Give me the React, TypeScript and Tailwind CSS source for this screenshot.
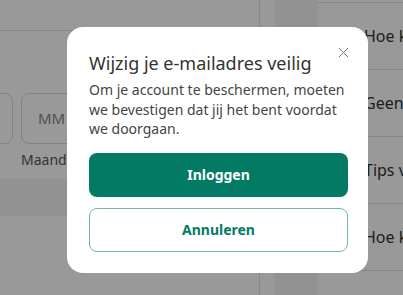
import { X } from "lucide-react";

const font = { fontFamily: '"Noto Sans", "Liberation Sans", sans-serif' };

const listItems = ["Hoe kan ik mijn e-mailadres wijzigen?", "Geen e-mail ontvangen?", "Tips voor een veilig account", "Hoe kan ik inloggen?"];

export default function App() {
  return (
    <div className="relative w-[403px] h-[295px] overflow-hidden bg-white text-[#333]" style={font}>
      {/* page underneath */}
      <div className="flex h-full">
        <div className="w-[260px] shrink-0 border-r border-[#e2e2e2] flex flex-col">
          <div className="h-[31px] border-b border-[#e2e2e2]" />
          <div className="flex gap-2 mt-[62px] -ml-[40px]">
            <div className="w-[53px] h-[51px] rounded-lg border border-[#d8d8d8]" />
            <div className="flex flex-col items-start">
              <div className="w-[70px] h-[51px] rounded-lg border border-[#d8d8d8] flex items-center pl-[16px] text-[15px] text-[#888]">
                MM
              </div>
              <span className="mt-[5px] text-[14px] text-[#555]">Maand</span>
            </div>
          </div>
          <div className="mt-[9px] h-[37px] bg-[#f4f4f4]" />
        </div>
        <div className="w-[15px] shrink-0" />
        <div className="w-[43px] shrink-0 bg-[#f4f4f4]" />
        <div className="flex-1 min-w-0 flex flex-col pt-[2px] overflow-hidden">
          <div className="border-b border-[#e2e2e2]" />
          {listItems.map((t) => (
            <div key={t} className="h-[67px] border-b border-[#e2e2e2] flex items-center pl-[46px] text-[16px] text-[#333] whitespace-nowrap overflow-hidden">
              {t}
            </div>
          ))}
        </div>
      </div>

      {/* overlay */}
      <div className="absolute inset-0 bg-black/40" />

      {/* modal */}
      <div className="absolute left-[67px] top-[27px] w-[301px] h-[246px] rounded-2xl bg-white px-[22px] pt-[24px]">
        <button className="absolute right-[16px] top-[17px] text-[#777]">
          <X size={17} strokeWidth={1.4} />
        </button>
        <h2 className="text-[18px] leading-[24px] text-[#333]">Wijzig je e-mailadres veilig</h2>
        <p className="mt-[5px] text-[14px] leading-[19.5px] text-[#444]">
          Om je account te beschermen, moeten we bevestigen dat jij het bent voordat we doorgaan.
        </p>
        <div className="mt-[14px] flex flex-col gap-[11px] w-[259px]">
          <button className="h-[44px] rounded-lg bg-[#037a63] text-white font-bold text-[14px]">Inloggen</button>
          <button className="h-[44px] rounded-lg border border-[#70b6a8] text-[#037a63] font-bold text-[14px]">
            Annuleren
          </button>
        </div>
      </div>
    </div>
  );
}
